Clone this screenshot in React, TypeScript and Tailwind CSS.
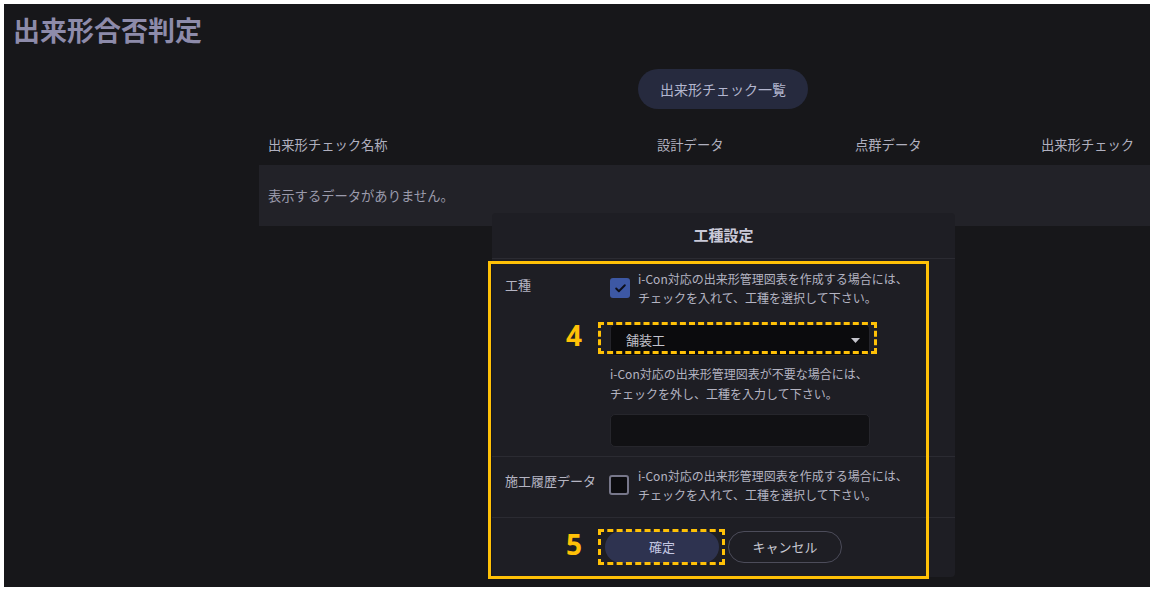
import { Check } from "lucide-react"

const COLUMNS = [
  { label: "出来形チェック名称", width: "w-[389px]" },
  { label: "設計データ", width: "w-[198px]" },
  { label: "点群データ", width: "w-[186px]" },
  { label: "出来形チェック", width: "w-[155px]" },
]

function Checkbox({ checked }: { checked: boolean }) {
  if (checked) {
    return (
      <div className="flex h-[20px] w-[20px] shrink-0 items-center justify-center rounded-[3px] bg-[#3d58a4]">
        <Check className="h-[13px] w-[13px] text-[#0d0f1a]" strokeWidth={3.5} />
      </div>
    )
  }
  return <div className="h-[20px] w-[20px] shrink-0 rounded-[3px] border-2 border-[#77778a] bg-[#0c0c0f]" />
}

function Dialog() {
  return (
    <div className="absolute left-[488px] top-[209px] w-[463px] overflow-hidden rounded-[4px] bg-[#1e1e24] text-[#b4b4c2]">
      <div className="flex h-[46px] items-center justify-center border-b border-[#2b2b32] text-[15px] font-bold text-[#c9c9d8]">
        工種設定
      </div>

      {/* 工種 */}
      <div className="flex border-b border-[#2b2b32] pb-[9px] pl-[13px] pt-[10px]">
        <div className="mt-[6px] w-[105px] shrink-0 text-[13px] leading-[19px]">工種</div>
        <div className="flex-1">
          <div className="flex gap-[8px]">
            <div className="mt-[9px]">
              <Checkbox checked />
            </div>
            <p className="whitespace-nowrap text-[12px] leading-[19px]">
              i-Con対応の出来形管理図表を作成する場合には、
              <br />
              チェックを入れて、工種を選択して下さい。
            </p>
          </div>
          <div className="mt-[17px] flex h-[32px] w-[260px] items-center justify-between rounded-[5px] border border-[#24242a] bg-[#0b0b0d] pl-[15px] pr-[9px] text-[13px] text-[#c4c4ce]">
            <span>舗装工</span>
            <svg width="9" height="5" viewBox="0 0 9 5">
              <path d="M0 0h9L4.5 5z" fill="#c4c4cc" />
            </svg>
          </div>
          <p className="mt-[8px] whitespace-nowrap text-[12px] leading-[20px]">
            i-Con対応の出来形管理図表が不要な場合には、
            <br />
            チェックを外し、工種を入力して下さい。
          </p>
          <div className="mt-[10px] h-[33px] w-[260px] rounded-[5px] border border-[#26262c] bg-[#111114]" />
        </div>
      </div>

      {/* 施工履歴データ */}
      <div className="flex border-b border-[#2b2b32] pb-[13px] pl-[13px] pt-[9px]">
        <div className="mt-[5px] w-[104px] shrink-0 whitespace-nowrap text-[13px] leading-[19px]">施工履歴データ</div>
        <div className="flex gap-[9px]">
          <div className="mt-[9px]">
            <Checkbox checked={false} />
          </div>
          <p className="whitespace-nowrap text-[12px] leading-[19px]">
            i-Con対応の出来形管理図表を作成する場合には、
            <br />
            チェックを入れて、工種を選択して下さい。
          </p>
        </div>
      </div>

      <div className="flex justify-center gap-[9px] pb-[14px] pt-[13px] text-[13px]">
        <button className="h-[32px] w-[114px] rounded-full bg-[#2e3350] text-[#c3c7e2]">確定</button>
        <button className="h-[32px] w-[114px] rounded-full border border-[#4c4c5a] text-[#c8c8d2]">キャンセル</button>
      </div>
    </div>
  )
}

function Annotations() {
  return (
    <>
      <div className="absolute left-[484px] top-[257px] h-[318px] w-[441px] border-[3px] border-[#ffc107]" />
      <div className="absolute left-[594px] top-[318px] h-[32px] w-[279px] border-[3px] border-dashed border-[#ffc107]" />
      <div className="absolute left-[594px] top-[525px] h-[36px] w-[127px] border-[3px] border-dashed border-[#ffc107]" />
      <div className="absolute left-[562px] top-[317px] flex h-[28px] items-center font-['Noto_Sans',sans-serif] text-[28px] font-bold text-[#ffc107]">
        4
      </div>
      <div className="absolute left-[562px] top-[526px] flex h-[28px] items-center font-['Noto_Sans',sans-serif] text-[28px] font-bold text-[#ffc107]">
        5
      </div>
    </>
  )
}

export default function App() {
  return (
    <div className="h-[594px] w-[1158px] bg-white pl-[4px] pt-[4px] font-['Noto_Sans_CJK_JP',sans-serif]">
      <div className="relative h-[583px] w-[1146px] overflow-hidden bg-[#17171a]">
        <h1 className="pl-[9px] pt-[8px] text-[27px] font-bold leading-[36px] text-[#8d8baa]">出来形合否判定</h1>

        <div className="flex">
          <div className="w-[255px] shrink-0" />
          <div className="w-[928px] shrink-0">
            <div className="mt-[21px] flex justify-center">
              <button className="h-[40px] w-[170px] rounded-full bg-[#262a3e] text-[14px] text-[#b3b6cf]">
                出来形チェック一覧
              </button>
            </div>

            <div className="mt-[16px] flex h-[40px] items-center text-[13.3px] text-[#b0b0bf]">
              {COLUMNS.map((c) => (
                <div key={c.label} className={`${c.width} shrink-0 whitespace-nowrap pl-[9px]`}>
                  {c.label}
                </div>
              ))}
            </div>
            <div className="flex h-[61px] items-center bg-[#222228] pl-[9px] text-[13.3px] text-[#9b9bac]">
              表示するデータがありません。
            </div>
          </div>
        </div>

        <Dialog />
        <Annotations />
      </div>
    </div>
  )
}
